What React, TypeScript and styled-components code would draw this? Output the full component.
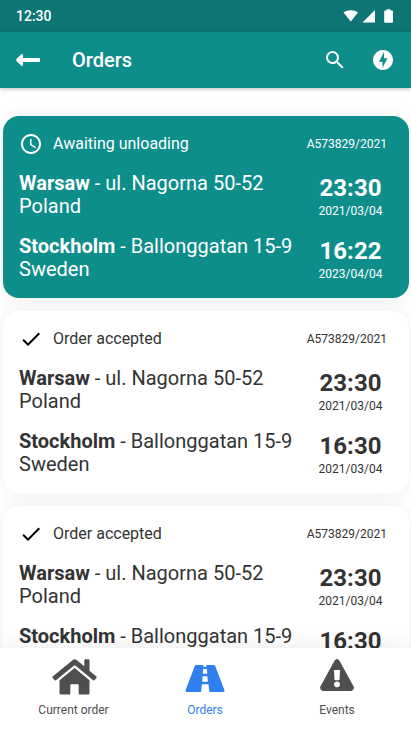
import React from 'react';
import styled, { createGlobalStyle, css } from 'styled-components';
import { MdAccessTime, MdCheck, MdOfflineBolt, MdSearch } from 'react-icons/md';

const Global = createGlobalStyle`
  * { box-sizing: border-box; }
  body { margin: 0; font-family: Roboto, sans-serif; background: #fff; overflow: hidden; }
`;

const Screen = styled.div`
  display: flex;
  flex-direction: column;
  width: 411px;
  height: 731px;
  overflow: hidden;
  background: #fff;
`;

const StatusBar = styled.div`
  flex: none;
  display: flex;
  align-items: center;
  justify-content: space-between;
  height: 32px;
  padding: 0 17px 0 16px;
  background: #0d7674;
  color: #fff;
  font-size: 14px;
  font-weight: 500;
  line-height: 16px;
  svg { display: block; }
`;

const AppBar = styled.header`
  flex: none;
  display: flex;
  align-items: center;
  height: 56px;
  padding: 0 16px;
  background: #0e8e8b;
  color: #fff;
  box-shadow: 0 1px 4px rgba(0, 0, 0, 0.25);
  z-index: 1;
  svg { display: block; }
`;

const Title = styled.h1`
  flex: 1;
  margin: 0 0 0 32px;
  font-size: 20px;
  font-weight: 500;
  line-height: 24px;
`;

const Actions = styled.div`
  display: flex;
  gap: 24px;
`;

const List = styled.main`
  flex: 1;
  min-height: 0;
  display: flex;
  flex-direction: column;
  gap: 13px;
  padding: 28px 2px 0 3px;
  overflow: hidden;
`;

const Card = styled.article<{ $active?: boolean }>`
  flex: none;
  height: 182px;
  padding: 16px 22px 0 16px;
  border-radius: 16px;
  background: #fff;
  color: #333;
  box-shadow: 0 0 20px rgba(0, 0, 0, 0.07);
  ${({ $active }) => $active && css`
    background: #0e8e8b;
    color: #fff;
  `}
`;

const CardHead = styled.div`
  display: flex;
  align-items: center;
  height: 24px;
  margin-bottom: 16px;
`;

const StatusIcon = styled.span<{ $active?: boolean }>`
  display: flex;
  margin-right: 10px;
  color: ${({ $active }) => ($active ? '#fff' : '#000')};
`;

const Status = styled.span`
  flex: 1;
  font-size: 16px;
  line-height: 24px;
`;

const OrderNo = styled.span`
  font-size: 12px;
  line-height: 14px;
`;

const Stop = styled.div`
  display: flex;
  justify-content: space-between;
  height: 46px;
  margin-bottom: 17px;
`;

const Address = styled.p`
  margin: 0;
  font-size: 20px;
  line-height: 23px;
  white-space: nowrap;
`;

const When = styled.div`
  width: 73px;
  padding-top: 2px;
  text-align: center;
`;

const Time = styled.div`
  font-size: 24px;
  font-weight: 700;
  line-height: 28px;
`;

const StopDate = styled.div`
  margin-top: 2px;
  font-size: 12px;
  line-height: 14px;
`;

const Nav = styled.nav`
  flex: none;
  display: grid;
  grid-template-columns: 147px 116px 148px;
  height: 83px;
  background: #fff;
  box-shadow: 0 -2px 20px rgba(0, 0, 0, 0.08);
  z-index: 1;
`;

const Tab = styled.div<{ $active?: boolean }>`
  display: flex;
  flex-direction: column;
  align-items: center;
  padding-top: 11px;
  color: ${({ $active }) => ($active ? '#2f80ed' : '#4f4f4f')};
  font-size: 12px;
  line-height: 14px;
`;

const TabIcon = styled.span<{ $drop?: number; $shift?: number }>`
  height: 44px;
  padding-top: ${({ $drop = 0 }) => $drop}px;
  padding-left: ${({ $shift = 0 }) => $shift}px;
  svg { display: block; fill: currentColor; }
`;

const HomeIcon = () => (
  <svg width="45" height="36" viewBox="0 0 45 36">
    <path d="M20.8 1Q22.7-.4 24.6 1L32.3 7.3V1.3Q32.3.3 33.3.3H36.5Q37.5.3 37.5 1.3V11.7L44.4 17.4Q45.1 18 44.5 18.8L42.7 21.1Q42 21.8 41.2 21.2L23.6 6.7Q22.7 6 21.8 6.7L4 21.2Q3.2 21.8 2.5 21.1L.6 18.8Q0 18 .7 17.4Z" />
    <path d="M22.6 9L37.5 21.3V34.2Q37.5 35.4 36.3 35.4H27.6Q26.7 35.4 26.7 34.4V26.3Q26.7 25.3 25.7 25.3H19.3Q18.3 25.3 18.3 26.3V34.4Q18.3 35.4 17.4 35.4H8.7Q7.5 35.4 7.5 34.2V21.3Z" />
  </svg>
);

const RoadIcon = () => (
  <svg width="40" height="27" viewBox="0 0 40 27">
    <path
      fillRule="evenodd"
      d="M11.3 0H18.4L18.2 1.8H21.6L21.4 0H28.7Q29.8 0 30.2 1L39.3 24.8Q40 27 38 27H24.4L23.5 19.3H16.9L16 27H2Q0 27 .7 24.8L9.8 1Q10.2 0 11.3 0ZM18.1 4L17.8 8.7H22.2L21.9 4ZM17.6 11.3L17.2 16.7H22.8L22.4 11.3Z"
    />
  </svg>
);

const WarningIcon = () => (
  <svg width="34" height="32" viewBox="0 0 34 32">
    <path
      fillRule="evenodd"
      d="M14.6 1.5Q17 -1.5 19.4 1.5L33.6 27.5Q34.8 31 31.2 32H2.8Q-.8 31 .4 27.5ZM14 11L14.5 20.6Q14.6 21.3 15.3 21.3H18.7Q19.4 21.3 19.5 20.6L20 11ZM17 22.4A2.9 2.9 0 1 0 17 28.2A2.9 2.9 0 1 0 17 22.4Z"
    />
  </svg>
);

type StopData = { city: string; street: string; country: string; time: string; date: string };
type Order = { status: string; number: string; active?: boolean; stops: StopData[] };

const warsaw: StopData = {
  city: 'Warsaw', street: 'ul. Nagorna 50-52', country: 'Poland', time: '23:30', date: '2021/03/04',
};
const stockholm: StopData = {
  city: 'Stockholm', street: 'Ballonggatan 15-9', country: 'Sweden', time: '16:30', date: '2021/03/04',
};

const orders: Order[] = [
  {
    status: 'Awaiting unloading',
    number: 'A573829/2021',
    active: true,
    stops: [warsaw, { ...stockholm, time: '16:22', date: '2023/04/04' }],
  },
  { status: 'Order accepted', number: 'A573829/2021', stops: [warsaw, stockholm] },
  { status: 'Order accepted', number: 'A573829/2021', stops: [warsaw, stockholm] },
];

function OrderCard({ order }: { order: Order }) {
  return (
    <Card $active={order.active}>
      <CardHead>
        <StatusIcon $active={order.active}>
          {order.active ? <MdAccessTime size={24} /> : <MdCheck size={24} />}
        </StatusIcon>
        <Status>{order.status}</Status>
        <OrderNo>{order.number}</OrderNo>
      </CardHead>
      {order.stops.map((s) => (
        <Stop key={s.city}>
          <Address>
            <b>{s.city}</b> - {s.street}
            <br />
            {s.country}
          </Address>
          <When>
            <Time>{s.time}</Time>
            <StopDate>{s.date}</StopDate>
          </When>
        </Stop>
      ))}
    </Card>
  );
}

export default function App() {
  return (
    <>
      <Global />
      <Screen>
        <StatusBar>
          <span>12:30</span>
          <svg width="51" height="16" viewBox="0 0 51 16" fill="#fff">
            <path d="M0.5 4.4C4.5 1.4 11 1.4 15 4.4L7.8 13.4Z" />
            <path d="M32 2V14.5H19.5Z" />
            <path d="M43.5 2.4V1.2H47.5V2.4H49Q50 2.4 50 3.4V13.7Q50 14.7 49 14.7H42.2Q41.2 14.7 41.2 13.7V3.4Q41.2 2.4 42.2 2.4Z" />
          </svg>
        </StatusBar>
        <AppBar>
          <svg width="24" height="14" viewBox="0 0 24 14" fill="#fff">
            <path d="M7 2V4.9H23.4Q24 4.9 24 5.5V8.5Q24 9.1 23.4 9.1H7V12Q6.6 13.6 5.2 12.7L.5 8Q-.4 7 .5 6L5.2 1.3Q6.6 .4 7 2Z" />
          </svg>
          <Title>Orders</Title>
          <Actions>
            <MdSearch size={24} />
            <MdOfflineBolt size={24} />
          </Actions>
        </AppBar>
        <List>
          {orders.map((o, i) => (
            <OrderCard key={i} order={o} />
          ))}
        </List>
        <Nav>
          <Tab>
            <TabIcon $shift={2}><HomeIcon /></TabIcon>
            Current order
          </Tab>
          <Tab $active>
            <TabIcon $drop={6}><RoadIcon /></TabIcon>
            Orders
          </Tab>
          <Tab>
            <TabIcon><WarningIcon /></TabIcon>
            Events
          </Tab>
        </Nav>
      </Screen>
    </>
  );
}
